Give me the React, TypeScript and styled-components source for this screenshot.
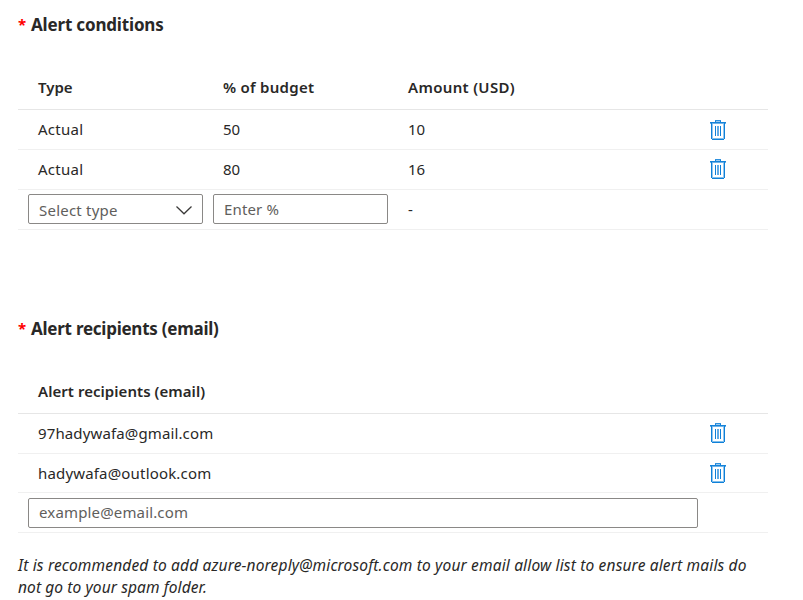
import React from 'react';
import styled, { createGlobalStyle } from 'styled-components';

const GlobalStyle = createGlobalStyle`
  *, *::before, *::after { box-sizing: border-box; }
  body {
    margin: 0;
    background: #fff;
    color: #292827;
    font: 400 15px/20px 'Segoe UI', 'Noto Sans', sans-serif;
  }
`;

const Page = styled.main`
  width: 803px;
  height: 600px;
  padding: 0 35px 0 18px;
  overflow: hidden;
`;

const Section = styled.section<{ $height: number }>`
  height: ${(p) => p.$height}px;
`;

const SectionTitle = styled.h2<{ $tracking: number }>`
  display: flex;
  gap: 5px;
  align-items: center;
  height: 67px;
  margin: 0;
  padding-bottom: 18px;
  font-size: 17px;
  line-height: 24px;
  font-weight: 700;
  letter-spacing: ${(p) => p.$tracking}px;
`;

const Required = styled.span`
  width: 8px;
  padding-bottom: 2px;
  color: #f00;
  font-size: 15px;
`;

const Row = styled.div<{ $height?: number; $header?: boolean }>`
  display: grid;
  grid-template-columns: 185px 185px 300px 1fr;
  align-items: center;
  height: ${(p) => p.$height ?? 40}px;
  padding-bottom: ${(p) => (p.$header ? 2 : p.$height === 39 ? 0 : 1)}px;
  border-bottom: 1px solid ${(p) => (p.$header ? '#e6e6e6' : '#f0f0f0')};
  font-weight: ${(p) => (p.$header ? 600 : 400)};
`;

const RecipientRow = styled(Row)`
  grid-template-columns: 670px 1fr;
`;

const Cell = styled.span<{ $tracking?: number }>`
  padding-left: 20px;
  letter-spacing: ${(p) => p.$tracking ?? 0}px;
  white-space: nowrap;
`;

const DeleteButton = styled.button<{ $lowered?: boolean }>`
  display: block;
  width: 16px;
  height: 20px;
  margin: ${(p) => (p.$lowered ? 2 : 0)}px 0 0 22px;
  padding: 0;
  border: 0;
  background: none;
`;

const fieldFrame = `
  height: 30px;
  border: 1px solid #8a8886;
  border-radius: 2px;
  background: #fff;
  color: #605e5c;
  font: inherit;
  text-align: left;
`;

const Select = styled.button`
  ${fieldFrame}
  display: flex;
  align-items: center;
  justify-content: space-between;
  width: 175px;
  margin-left: 10px;
  padding: 2px 10px 0;
  letter-spacing: 0.22px;
`;

const Input = styled.input<{ $width: number }>`
  ${fieldFrame}
  width: ${(p) => p.$width}px;
  margin-left: 10px;
  padding: 0 10px;
  letter-spacing: 0.15px;
  &::placeholder { color: #605e5c; opacity: 1; }
`;

const EmailInput = styled(Input)`
  margin-top: 2px;
  padding-bottom: 2px;
`;

const Note = styled.p`
  margin: -1px 0 0;
  font-size: 15.5px;
  font-style: italic;
  line-height: 22px;
  white-space: nowrap;
`;

const NoteLine = styled.span<{ $tracking: number }>`
  display: block;
  letter-spacing: ${(p) => p.$tracking}px;
`;

function TrashIcon() {
  return (
    <svg width="16" height="20" viewBox="0 0 16 20" fill="none" shapeRendering="crispEdges">
      <path d="M5 0h6v1H5z" fill="#2f91de" />
      <path d="M5 1h1v1H5zM10 1h1v1h-1z" fill="#1683d9" />
      <path d="M6 1h4v1H6z" fill="#9ccbf0" />
      <path d="M0 2h16v1H0z" fill="#1683d9" />
      <path d="M0 3h16v1H0z" fill="#6eb3e9" />
      <path d="M1 3h1v16h-1zM14 3h1v16h-1zM2 19h12v1h-12z" fill="#0f80d8" />
      <path d="M2 4h1v14h-1zM13 4h1v14h-1z" fill="#93c7ef" />
      <path d="M2 18h12v1H2z" fill="#7fbdeb" />
      <path d="M5 6h1v10h-1zM10 6h1v10h-1z" fill="#0f80d8" />
      <path d="M7 6h2v10h-2z" fill="#62abe6" />
    </svg>
  );
}

function ChevronIcon() {
  return (
    <svg width="16" height="9" viewBox="0 0 16 9" fill="none">
      <path d="M.5 .5 8 7.800l7.500-7.300" stroke="#3b3a39" strokeWidth="1.250" />
    </svg>
  );
}

function Delete({ lowered }: { lowered?: boolean }) {
  return (
    <DeleteButton aria-label="Delete" $lowered={lowered}>
      <TrashIcon />
    </DeleteButton>
  );
}

const conditions = [
  { type: 'Actual', percent: '50', amount: '10' },
  { type: 'Actual', percent: '80', amount: '16' },
];

const recipients = [
  { email: '97hadywafa@gmail.com', tracking: 0.13, height: 40 },
  { email: 'hadywafa@outlook.com', tracking: 0.17, height: 39 },
];

export default function App() {
  return (
    <>
      <GlobalStyle />
      <Page>
        <Section $height={304}>
          <SectionTitle $tracking={-0.17}>
            <Required>*</Required>Alert conditions
          </SectionTitle>
          <Row $header $height={43}>
            <Cell>Type</Cell>
            <Cell $tracking={0.27}>% of budget</Cell>
            <Cell $tracking={0.33}>Amount (USD)</Cell>
          </Row>
          {conditions.map((c, i) => (
            <Row key={c.percent}>
              <Cell $tracking={0.25}>{c.type}</Cell>
              <Cell>{c.percent}</Cell>
              <Cell>{c.amount}</Cell>
              <Delete lowered={i === 0} />
            </Row>
          ))}
          <Row>
            <Select>
              Select type
              <ChevronIcon />
            </Select>
            <Input $width={175} placeholder="Enter %" />
            <Cell>-</Cell>
          </Row>
        </Section>
        <Section $height={251}>
          <SectionTitle $tracking={-0.25}>
            <Required>*</Required>Alert recipients (email)
          </SectionTitle>
          <RecipientRow $header $height={43}>
            <Cell $tracking={0.05}>Alert recipients (email)</Cell>
          </RecipientRow>
          {recipients.map((r) => (
            <RecipientRow key={r.email} $height={r.height}>
              <Cell $tracking={r.tracking}>{r.email}</Cell>
              <Delete />
            </RecipientRow>
          ))}
          <RecipientRow>
            <EmailInput $width={670} placeholder="example@email.com" />
          </RecipientRow>
        </Section>
        <Note>
          <NoteLine $tracking={0.16}>
            It is recommended to add azure-noreply@microsoft.com to your email allow list to ensure alert mails do
          </NoteLine>
          <NoteLine $tracking={0.1}>not go to your spam folder.</NoteLine>
        </Note>
      </Page>
    </>
  );
}
